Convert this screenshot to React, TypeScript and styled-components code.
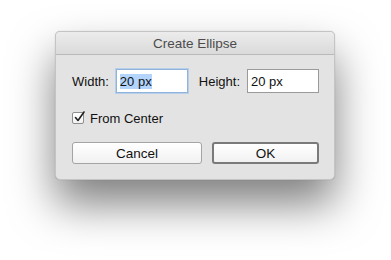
import styled, { createGlobalStyle } from "styled-components";

const GlobalStyle = createGlobalStyle`
    html, body {
        margin: 0;
        padding: 0;
        background: #ffffff;
    }
    body {
        font-family: "Liberation Sans", Arial, sans-serif;
    }
`

const Page = styled.div`
    width: 391px;
    height: 260px;
    padding: 31px 0 0 55px;
    box-sizing: border-box;
`

const Dialog = styled.div`
    width: 280px;
    height: 149px;
    box-sizing: border-box;
    background: #e3e3e3;
    border: 1px solid #c4c4c4;
    border-radius: 5px;
    box-shadow: 0 24px 44px rgba(0, 0, 0, 0.5), 0 0 1px rgba(0, 0, 0, 0.25);
    display: flex;
    flex-direction: column;
    overflow: hidden;
`

const TitleBar = styled.div`
    height: 22px;
    flex-shrink: 0;
    background: linear-gradient(#ececec, #dadada);
    border-bottom: 1px solid #b9b9b9;
    display: flex;
    align-items: center;
    justify-content: center;
    font-size: 13.5px;
    color: #4c4c4c;
`

const Body = styled.div`
    padding: 14px 15px 0 15px;
    display: flex;
    flex-direction: column;
`

const FieldRow = styled.div`
    display: flex;
    align-items: center;
    height: 24px;
`

const Label = styled.span<{ left: number; right: number }>`
    font-size: 13px;
    color: #111;
    margin-left: ${props => props.left}px;
    margin-right: ${props => props.right}px;
`

const Input = styled.div<{ focused?: boolean }>`
    width: 72px;
    height: 24px;
    box-sizing: border-box;
    background: #ffffff;
    border: 1px solid ${props => props.focused ? "#8fb3dc" : "#9a9a9a"};
    box-shadow: ${props => props.focused ? "0 0 0 1px #b8cfea" : "none"};
    display: flex;
    align-items: center;
    padding-left: 3px;
    font-size: 13px;
    color: #111;
`

const Selected = styled.span`
    background: #b3d4fc;
`

const CheckRow = styled.label`
    display: flex;
    align-items: center;
    margin-top: 17px;
    margin-left: 1px;
    height: 16px;
    font-size: 13px;
    color: #111;
`

const CheckBox = styled.span`
    width: 12px;
    height: 12px;
    box-sizing: border-box;
    background: linear-gradient(#ffffff, #f2f2f2);
    border: 1px solid #8e8e8e;
    border-radius: 2px;
    margin-right: 6px;
    position: relative;
    svg {
        position: absolute;
        left: 0px;
        top: -3px;
    }
`

const ButtonRow = styled.div`
    display: flex;
    gap: 10px;
    margin-top: 16px;
    margin-left: 1px;
`

const Button = styled.div<{ primary?: boolean; w: number }>`
    width: ${props => props.w}px;
    height: 22px;
    box-sizing: border-box;
    background: linear-gradient(#ffffff, #f1f1f1);
    border: ${props => props.primary ? "2px solid #7a7a7a" : "1px solid #a4a4a4"};
    border-radius: 3px;
    display: flex;
    align-items: center;
    justify-content: center;
    font-size: 13.5px;
    color: #111;
`

export default function App() {
    return (
        <>
            <GlobalStyle />
            <Page>
                <Dialog>
                    <TitleBar>Create Ellipse</TitleBar>
                    <Body>
                        <FieldRow>
                            <Label left={1} right={7}>Width:</Label>
                            <Input focused><Selected>20 px</Selected></Input>
                            <Label left={11} right={7}>Height:</Label>
                            <Input>20 px</Input>
                        </FieldRow>
                        <CheckRow>
                            <CheckBox>
                                <svg width="14" height="14" viewBox="0 0 14 14">
                                    <path d="M2.5 7.5 L5 10.5 L11 2" fill="none" stroke="#222" strokeWidth="1.6" strokeLinecap="round" strokeLinejoin="round" />
                                </svg>
                            </CheckBox>
                            From Center
                        </CheckRow>
                        <ButtonRow>
                            <Button w={130}>Cancel</Button>
                            <Button primary w={107}>OK</Button>
                        </ButtonRow>
                    </Body>
                </Dialog>
            </Page>
        </>
    )
}
